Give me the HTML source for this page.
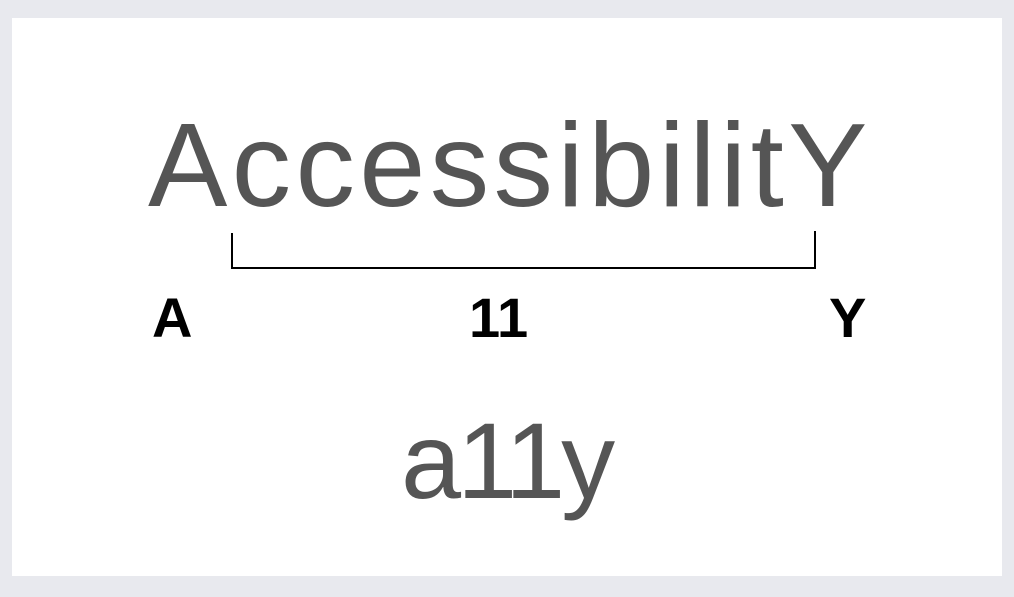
<!DOCTYPE html>
<html><head><style>
html,body{margin:0;padding:0;}
body{width:1014px;height:597px;background:#e8e9ee;position:relative;overflow:hidden;font-family:"Liberation Sans",sans-serif;}
.card{position:absolute;left:12px;top:18px;width:990px;height:558px;background:#fff;}
.t{position:absolute;white-space:nowrap;line-height:1;}
.big{left:148px;top:106px;font-size:119px;color:#555;letter-spacing:4.3px;}
.lab{font-size:56px;font-weight:bold;color:#000;top:290px;}
.ally{left:401px;top:407px;font-size:108px;color:#555;letter-spacing:-4px;}
.l{position:absolute;background:#000;}
</style></head><body>
<div class="card"></div>
<div class="t big">AccessibilitY</div>
<div class="l" style="left:231px;top:233px;width:2px;height:36px"></div>
<div class="l" style="left:814px;top:231px;width:2px;height:38px"></div>
<div class="l" style="left:231px;top:267px;width:585px;height:2px"></div>
<div class="t lab" style="left:152px">A</div>
<div class="t lab" style="left:469px">11</div>
<div class="t lab" style="left:829px">Y</div>
<div class="t ally">a11y</div>
</body></html>
